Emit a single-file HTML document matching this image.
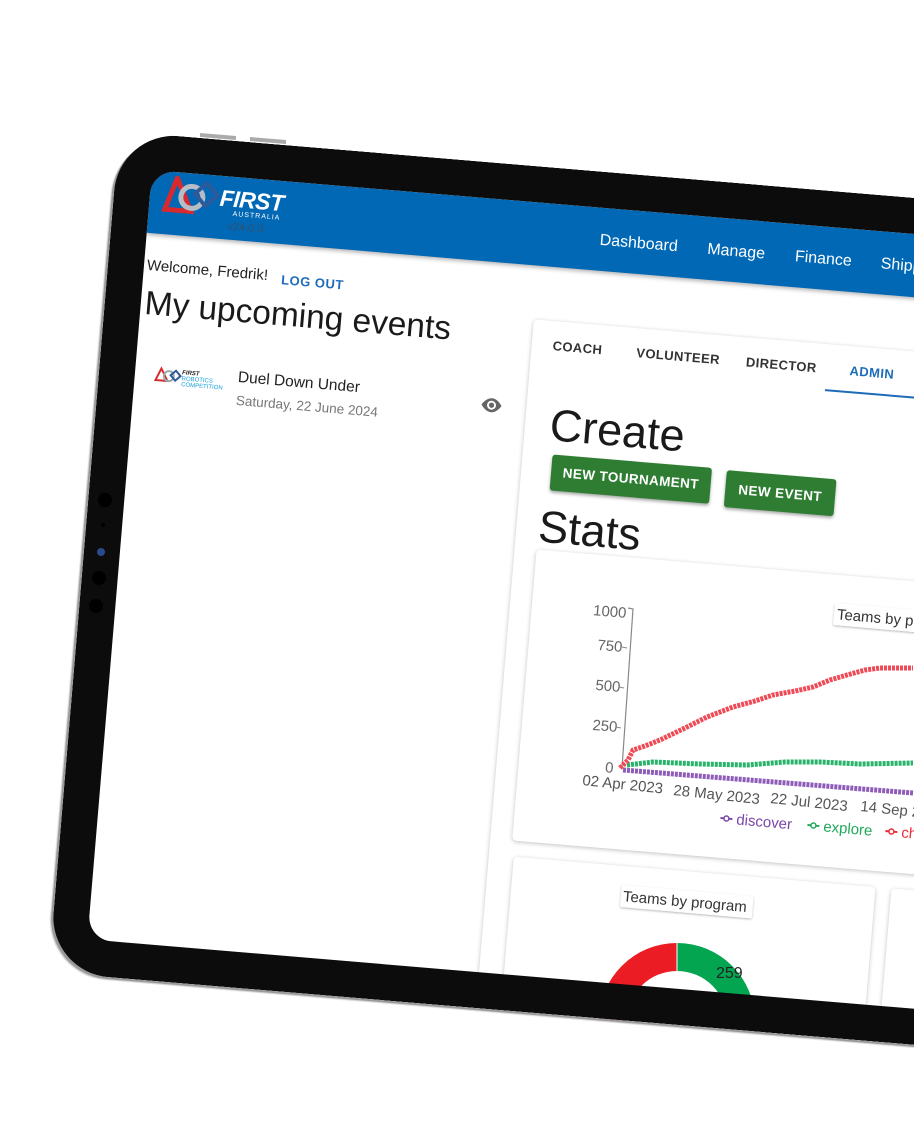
<!DOCTYPE html>
<html><head><meta charset="utf-8"><style>
html,body{margin:0;padding:0;background:#fff;width:914px;height:1130px;overflow:hidden;font-family:"Liberation Sans",sans-serif;}
.rot{position:absolute;left:152px;top:170px;transform-origin:0 0;transform:rotate(4.8deg);}
.screen{position:absolute;left:0;top:0;width:1000px;height:772px;background:#fff;border-radius:24px 0 0 24px;overflow:hidden;}
.hdr{position:absolute;left:0;top:0;width:1000px;height:63px;background:#0068b5;box-shadow:0 2px 4px rgba(0,0,0,.3);}
.a{position:absolute;white-space:nowrap;}
.nav{color:#fff;font-size:16px;top:24px;}
.tab{font-size:13px;font-weight:bold;color:#333;top:134px;letter-spacing:.4px;}
.btn{position:absolute;background:#2e7d32;color:#fff;font-size:13.5px;font-weight:bold;letter-spacing:.4px;text-align:center;border-radius:3px;box-shadow:0 2px 3px rgba(0,0,0,.35);}
.card{position:absolute;background:#fff;border-radius:4px;box-shadow:0 1px 4px rgba(0,0,0,.25);}
.bezel{position:absolute;left:-36px;top:-36px;width:1100px;height:844px;border:36px solid #0c0c0c;border-right:none;border-radius:60px 0 0 60px;box-sizing:border-box;box-shadow:-2px 2px 0 #9a9a9a,-3px 3px 1px #ccc;}
.bezel:before{content:"";position:absolute;left:-1px;top:-1px;right:0;bottom:-1px;border-radius:25px 0 0 25px;box-shadow:0 0 0 2px #0c0c0c;}
</style></head><body>
<div class="rot">
 <div class="screen">
  <div class="hdr">
   <svg class="a" style="left:12px;top:4px" width="60" height="40" viewBox="0 0 60 40">
    <polygon points="4,34 14,2 30,34" fill="none" stroke="#d82a2e" stroke-width="5"/>
    <circle cx="30" cy="20" r="11" fill="none" stroke="#b8bcc4" stroke-width="5"/>
    <rect x="36" y="8" width="16" height="16" transform="rotate(45 44 16)" fill="none" stroke="#2d5a9a" stroke-width="4"/>
   </svg>
   <div class="a" style="left:70px;top:9px;color:#fff;font-size:23px;font-weight:bold;font-style:italic;letter-spacing:-0.5px">FIRST</div>
   <div class="a" style="left:84px;top:34px;color:#fff;font-size:7px;letter-spacing:1px">AUSTRALIA</div>
   <div class="a" style="left:80px;top:44px;color:#34506f;font-size:11px">v24.0.3</div>
   <div class="a nav" style="left:452px">Dashboard</div>
   <div class="a nav" style="left:560px">Manage</div>
   <div class="a nav" style="left:648px">Finance</div>
   <div class="a nav" style="left:734px">Shipping</div>
  </div>
  <div class="a" style="left:3px;top:87px;font-size:15px;color:#222">Welcome, Fredrik!</div>
  <div class="a" style="left:138px;top:91px;font-size:13px;font-weight:bold;color:#1e6cb8;letter-spacing:.5px">LOG OUT</div>
  <div class="a" style="left:4px;top:115px;font-size:33.5px;color:#1a1a1a">My upcoming events</div>
  <svg class="a" style="left:19px;top:193px" width="70" height="24" viewBox="0 0 70 24">
   <polygon points="2,16 7,4 14,16" fill="none" stroke="#d82a2e" stroke-width="2"/>
   <circle cx="15" cy="11" r="5" fill="none" stroke="#9aa" stroke-width="2"/>
   <rect x="18" y="6" width="7" height="7" transform="rotate(45 21 10)" fill="none" stroke="#2d5a9a" stroke-width="2"/>
   <text x="28" y="8" font-size="6" font-weight="bold" font-style="italic" fill="#222">FIRST</text>
   <text x="28" y="14" font-size="6" fill="#1aa0e0">ROBOTICS</text>
   <text x="28" y="20" font-size="6" fill="#1aa0e0">COMPETITION</text>
  </svg>
  <div class="a" style="left:103px;top:191px;font-size:15.5px;color:#222">Duel Down Under</div>
  <div class="a" style="left:103px;top:215px;font-size:13.5px;color:#777">Saturday, 22 June 2024</div>
  <svg class="a" style="left:346px;top:196px" width="24" height="20" viewBox="0 0 24 20">
   <path d="M12 3C6 3 2 10 2 10s4 7 10 7 10-7 10-7-4-7-10-7z" fill="#666"/>
   <circle cx="12" cy="10" r="4.5" fill="#fff"/><circle cx="12" cy="10" r="2.6" fill="#666"/>
  </svg>
  <div class="card" style="left:393px;top:117px;width:700px;height:700px">
  </div>
  <div class="a tab" style="left:414px">COACH</div>
  <div class="a tab" style="left:498px">VOLUNTEER</div>
  <div class="a tab" style="left:608px">DIRECTOR</div>
  <div class="a tab" style="left:712px;color:#1e6cb8">ADMIN</div>
  <div class="a" style="left:689px;top:162px;width:110px;height:2px;background:#1e6cb8"></div>
  <div class="a" style="left:418px;top:195px;font-size:45px;color:#1a1a1a">Create</div>
  <div class="btn" style="left:423px;top:250px;width:160px;height:36px;line-height:36px">NEW TOURNAMENT</div>
  <div class="btn" style="left:598px;top:251px;width:110px;height:37px;line-height:37px">NEW EVENT</div>
  <div class="a" style="left:415px;top:297px;font-size:45px;color:#1a1a1a">Stats</div>
  <div class="card" style="left:415px;top:346px;width:600px;height:292px"></div>
  <div class="card" style="left:418px;top:654px;width:363px;height:200px"></div>
  <div class="card" style="left:797px;top:654px;width:300px;height:200px"></div>
 </div>
</div>

<svg style="position:absolute;left:0;top:0" width="914" height="1130" viewBox="0 0 914 1130" font-family="Liberation Sans, sans-serif">
 <g fill="#666" font-size="15" text-anchor="end">
  <text x="626" y="618" transform="rotate(5 626 618)">1000</text>
  <text x="622" y="652" transform="rotate(5 622 652)">750</text>
  <text x="620" y="692" transform="rotate(5 620 692)">500</text>
  <text x="617" y="732" transform="rotate(5 617 732)">250</text>
  <text x="613" y="773" transform="rotate(5 613 773)">0</text>
 </g>
 <path d="M628 608 L633 609 L622 768" fill="none" stroke="#888" stroke-width="1.2"/>
 <g stroke="#888" stroke-width="1"><line x1="622" y1="647" x2="627" y2="648"/><line x1="619" y1="687" x2="624" y2="688"/><line x1="616" y1="727" x2="621" y2="728"/></g>
 <g fill="#555" font-size="15">
  <text x="582" y="785" transform="rotate(6 582 785)">02 Apr 2023</text>
  <text x="673" y="795" transform="rotate(6 673 795)">28 May 2023</text>
  <text x="770" y="803" transform="rotate(6 770 803)">22 Jul 2023</text>
  <text x="860" y="811" transform="rotate(6 860 811)">14 Sep 2023</text>
 </g>
 <polyline points="623,770 913,793" fill="none" stroke="#8e5cb8" stroke-width="5" stroke-dasharray="3 1"/>
 <polyline points="627,765 653,762 700,764 747,765 785,762 820,762 860,764 913,763" fill="none" stroke="#29b36a" stroke-width="5" stroke-dasharray="3 1"/>
 <polyline points="620,768 628,760 633,750 645,746 660,740 685,728 707,717 733,707 755,701 773,695 795,691 813,687 830,680 847,675 865,670 880,668 913,668" fill="none" stroke="#ef4a55" stroke-width="5" stroke-dasharray="3 1"/>
 <defs><filter id="sh" x="-10%" y="-20%" width="120%" height="160%"><feDropShadow dx="0" dy="1" stdDeviation="1" flood-opacity=".3"/></filter></defs>
 <g transform="rotate(5 835 603)">
  <rect x="835" y="603" width="120" height="22" rx="2" fill="#fff" filter="url(#sh)"/>
  <text x="838" y="619" font-size="15" fill="#333">Teams by program</text>
 </g>
 <g font-size="15">
  <g transform="rotate(5 720 823)"><line x1="720" y1="818" x2="732" y2="818" stroke="#7a45a8" stroke-width="2"/><circle cx="726" cy="818" r="2.5" fill="#fff" stroke="#7a45a8" stroke-width="1.5"/><text x="736" y="823" fill="#7a45a8">discover</text></g>
  <g transform="rotate(5 807 830)"><line x1="807" y1="825" x2="819" y2="825" stroke="#1fa85a" stroke-width="2"/><circle cx="813" cy="825" r="2.5" fill="#fff" stroke="#1fa85a" stroke-width="1.5"/><text x="823" y="830" fill="#1fa85a">explore</text></g>
  <g transform="rotate(5 885 836)"><line x1="885" y1="831" x2="897" y2="831" stroke="#ee2b36" stroke-width="2"/><circle cx="891" cy="831" r="2.5" fill="#fff" stroke="#ee2b36" stroke-width="1.5"/><text x="901" y="836" fill="#ee2b36">challenge</text></g>
 </g>
 <g transform="rotate(5 622 885)">
  <rect x="622" y="885" width="132" height="22" rx="2" fill="#fff" filter="url(#sh)"/>
  <text x="624" y="901" font-size="15" fill="#333">Teams by program</text>
 </g>
 <path d="M677 943 A78 78 0 0 1 755 1021 L727 1021 A50 50 0 0 0 677 971 Z" fill="#03a550"/>
 <path d="M677 943 A78 78 0 0 0 599 1021 L627 1021 A50 50 0 0 1 677 971 Z" fill="#ec1c24"/>
 <line x1="677" y1="943" x2="677" y2="971" stroke="#fff" stroke-width="1"/>
 <text x="716" y="978" font-size="16" fill="#222">259</text>
</svg>

<div class="rot">
 <div class="bezel"></div>
</div>
<svg style="position:absolute;left:0;top:0" width="914" height="1130" viewBox="0 0 914 1130">
 <path d="M200 137 L236 140 L236 136 L200 133Z" fill="#aaa"/>
 <path d="M250 141 L286 144 L286 140 L250 137Z" fill="#aaa"/>
 <circle cx="105" cy="500" r="7" fill="#000"/>
 <circle cx="103" cy="525" r="2" fill="#000"/>
 <circle cx="101" cy="552" r="4" fill="#2a4a8a"/>
 <circle cx="99" cy="578" r="7" fill="#000"/>
 <circle cx="96" cy="606" r="7" fill="#000"/>
</svg>
</body></html>
